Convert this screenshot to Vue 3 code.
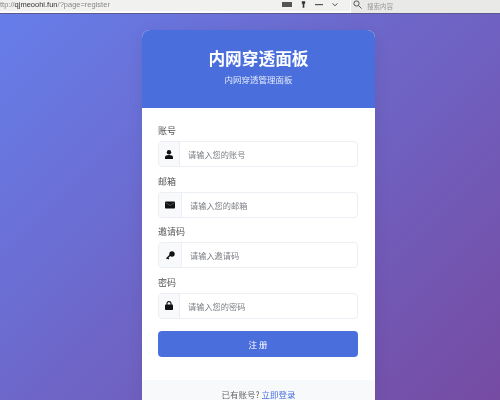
<script setup>
const fields = [
  { label: '账号', ph: '请输入您的账号', icon: 'user', w: 20 },
  { label: '邮箱', ph: '请输入您的邮箱', icon: 'mail', w: 22 },
  { label: '邀请码', ph: '请输入邀请码', icon: 'key', w: 22 },
  { label: '密码', ph: '请输入您的密码', icon: 'lock', w: 20 }
]
</script>

<template>
  <div class="page">
    <div class="topbar">
      <div class="url"><span class="dim">ttp://</span><b>qjmeoohi.fun</b><span class="dim">/?page=register</span></div>
      <div class="tools">
        <svg width="10" height="5" viewBox="0 0 10 5"><rect width="10" height="5" fill="#555" /></svg>
        <svg width="5" height="7" viewBox="0 0 6 8"><path d="M1 0h4v3H4v5H2V3H1z" fill="#333" /></svg>
        <svg width="8" height="3" viewBox="0 0 8 3"><rect width="8" height="1.200" y="1" fill="#555" /></svg>
        <svg width="6" height="4" viewBox="0 0 7 5"><path d="M.5.5l3 3 3-3" fill="none" stroke="#444" stroke-width="1.200" /></svg>
      </div>
      <div class="search">
        <svg width="9" height="9" viewBox="0 0 9 9"><circle cx="3.500" cy="3.500" r="2.600" fill="none" stroke="#555" /><path d="M5.500 5.500L8.500 8.500" stroke="#555" /></svg>
        <span>搜索内容</span>
      </div>
    </div>
    <main class="stage">
      <section class="card">
        <header class="head">
          <h1>内网穿透面板</h1>
          <p>内网穿透管理面板</p>
        </header>
        <form class="body" @submit.prevent>
          <div v-for="f in fields" :key="f.label" class="field">
            <label>{{ f.label }}</label>
            <div class="group">
              <span class="addon" :style="{ width: f.w + 'px' }">
                <svg v-if="f.icon === 'user'" width="8" height="9" viewBox="0 0 8 9"><circle cx="4" cy="2.300" r="2.200" fill="#111" /><path d="M0 9V7.200C0 5.800 1.500 5 4 5s4 .8 4 2.200V9z" fill="#111" /></svg>
                <svg v-else-if="f.icon === 'mail'" width="10" height="8" viewBox="0 0 10 7"><rect width="10" height="7" rx=".8" fill="#111" /><path d="M.5 1.200L5 4l4.500-2.800" fill="none" stroke="#888" stroke-width=".5" /></svg>
                <svg v-else-if="f.icon === 'key'" width="9" height="9" viewBox="0 0 9 9"><circle cx="6" cy="3" r="2.700" fill="#111" /><path d="M4.500 3.800L.5 7.800M1.500 6.800l1.300 1.300" stroke="#111" stroke-width="1.400" /></svg>
                <svg v-else width="8" height="9" viewBox="0 0 8 9"><path d="M2 4V2.600a2 2 0 014 0V4" fill="none" stroke="#111" stroke-width="1.100" /><rect y="3.600" width="8" height="5.400" rx=".8" fill="#111" /></svg>
              </span>
              <input class="control" type="text" :placeholder="f.ph" />
            </div>
          </div>
          <button class="submit" type="submit">注 册</button>
        </form>
        <footer class="foot">已有账号? <a href="#">立即登录</a></footer>
      </section>
    </main>
  </div>
</template>

<style>
html, body { margin: 0; height: 100%; overflow: hidden; }
</style>

<style scoped>
.page {
  width: 500px;
  height: 400px;
  overflow: hidden;
  font-family: "Noto Sans CJK SC", "Liberation Sans", sans-serif;
  filter: blur(0.7px);
}
.topbar {
  height: 13px;
  background: #f1f1ef;
  border-bottom: 1px solid #5b5a8c;
  display: flex;
  align-items: center;
  font-size: 7.500px;
  color: #777;
  overflow: hidden;
  box-shadow: inset 0 -2px 0 #fbfbfb;
}
.url { width: 282px; white-space: nowrap; font-family: "Liberation Sans", sans-serif; margin-top: -5px; }
.url b { color: #333; font-weight: 400; }
.dim { color: #888; }
.tools { width: 68px; display: flex; align-items: center; gap: 9px; margin-top: -4px; }
.search {
  flex: 1;
  height: 13px;
  background: #e9e9e7;
  border-left: 1px solid #fff;
  display: flex;
  align-items: flex-start;
  gap: 5px;
  padding-left: 2px;
  color: #999;
  font-size: 6.500px;
  line-height: 12px;
}
.stage {
  height: 386px;
  padding-top: 16px;
  box-sizing: border-box;
  background: linear-gradient(135deg, #667eea 0%, #764ba2 100%);
  display: flex;
  justify-content: center;
}
.card {
  width: 233px;
  margin-left: 17px;
  height: 420px;
  flex: none;
  background: #fff;
  border-radius: 8px;
  overflow: hidden;
  box-shadow: 0 4px 16px rgba(0, 0, 0, .08);
}
.head {
  height: 78px;
  background: #4a6fdc;
  color: #fff;
  text-align: center;
  box-sizing: border-box;
  padding-top: 16px;
}
.head h1 { margin: 0; font-size: 16.700px; line-height: 24px; font-weight: 700; }
.head p { margin: 3px 0 0; font-size: 8.500px; line-height: 12px; opacity: .85; }
.body {
  height: 272px;
  box-sizing: border-box;
  padding: 17px 17px 0 16px;
  display: flex;
  flex-direction: column;
}
.field { margin-bottom: 8.670px; }
.field label {
  display: block;
  height: 16px;
  line-height: 12px;
  font-size: 9px;
  color: #555;
}
.group {
  display: flex;
  height: 26px;
  border: 1px solid #eceef3;
  border-radius: 4px;
  box-sizing: border-box;
  overflow: hidden;
  background: #fff;
}
.addon {
  flex: none;
  background: #f8f9fa;
  border-right: 1px solid #eceef3;
  display: flex;
  align-items: center;
  justify-content: center;
}
.control {
  flex: 1;
  min-width: 0;
  border: 0;
  outline: 0;
  padding: 0 0 0 8px;
  font: 8.200px "Noto Sans CJK SC", sans-serif;
  background: transparent;
}
.control::placeholder { color: #7d8085; opacity: 1; }
.submit {
  height: 26px;
  margin-top: 3px;
  border: 0;
  border-radius: 4px;
  background: #4a6fdc;
  color: #fff;
  font: 8.500px "Noto Sans CJK SC", sans-serif;
  padding: 0;
}
.foot {
  background: #f8f9fa;
  height: 70px;
  text-align: center;
  font-size: 8.500px;
  line-height: 11px;
  padding-top: 9px;
  box-sizing: border-box;
  color: #666;
}
.foot a { color: #4a6fdc; text-decoration: none; }
</style>
